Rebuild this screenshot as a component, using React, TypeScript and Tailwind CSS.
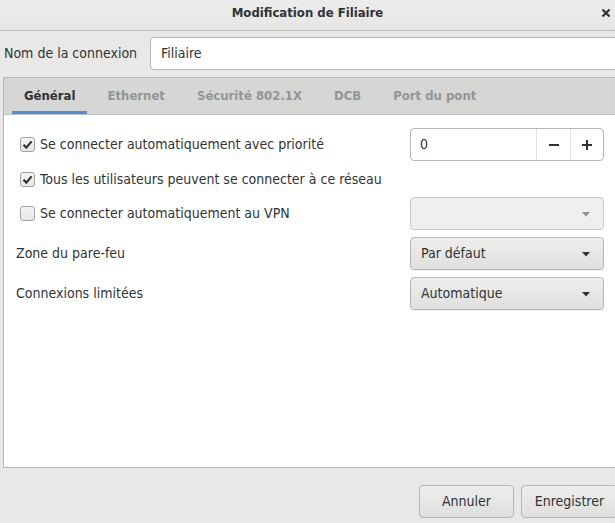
import React from "react";

const font = { fontFamily: '"DejaVu Sans Condensed", "DejaVu Sans", sans-serif' };

function CheckBox({ checked }: { checked?: boolean }) {
  return (
    <span className="w-[15px] h-[15px] rounded-[3px] border border-[#a1a1a1] bg-gradient-to-b from-[#f4f4f4] to-[#e6e6e6] flex items-center justify-center shrink-0">
      {checked && (
        <svg width="11" height="11" viewBox="0 0 11 11">
          <path d="M1.5 5.8 L4.3 8.6 L9.6 2.4" fill="none" stroke="#2e3436" strokeWidth="2.2" />
        </svg>
      )}
    </span>
  );
}

function Arrow({ color = "#2e3436" }: { color?: string }) {
  return (
    <svg width="10" height="6" viewBox="0 0 10 6">
      <path d="M1 1 L9 1 L5 5.5 Z" fill={color} />
    </svg>
  );
}

function Combo({ label, disabled }: { label?: string; disabled?: boolean }) {
  return (
    <div
      className={
        disabled
          ? "h-[33px] w-[194px] rounded-[4px] border border-[#cdc7c2] bg-[#efefef] flex items-center justify-end pr-[12px]"
          : "h-[33px] w-[194px] rounded-[4px] border border-[#b6b6b3] bg-gradient-to-b from-[#eeeeed] to-[#dfdfde] flex items-center justify-between pl-[10px] pr-[12px] shadow-[0_1px_0_rgba(0,0,0,0.05)]"
      }
    >
      {label && <span>{label}</span>}
      <Arrow color={disabled ? "#8b8e8f" : "#2e3436"} />
    </div>
  );
}

export default function App() {
  const tabs = ["Général", "Ethernet", "Sécurité 802.1X", "DCB", "Port du pont"];
  return (
    <div
      className="w-[615px] h-[523px] overflow-hidden bg-[#e8e8e7] text-[#2e3436] text-[14px] flex flex-col"
      style={font}
    >
      {/* title bar */}
      <div className="h-[31px] shrink-0 relative flex items-center justify-center bg-gradient-to-b from-[#ececec] to-[#e6e6e5] border-b border-[#bdbdbb]">
        <span className="font-bold text-[13px] -mt-[4px]">Modification de Filiaire</span>
        <svg className="absolute right-[4px] top-[8px]" width="10" height="10" viewBox="0 0 10 10">
          <path d="M1.5 1.5 L8.5 8.5 M8.5 1.5 L1.5 8.5" stroke="#2e3436" strokeWidth="2.2" />
        </svg>
      </div>

      {/* name row */}
      <div className="flex items-center mt-[6px] pl-[4px] shrink-0">
        <span className="w-[146px] shrink-0">Nom de la connexion</span>
        <div className="h-[33px] w-[480px] shrink-0 rounded-[4px] border border-[#b6b6b3] bg-white flex items-center pl-[10px]">
          Filiaire
        </div>
      </div>

      {/* notebook */}
      <div className="mt-[7px] ml-[3px] w-[630px] h-[391px] shrink-0 border border-[#b6b6b3] bg-white flex flex-col">
        <div className="h-[37px] shrink-0 bg-[#d6d6d5] border-b border-[#c0c0be] flex items-stretch pl-[8px] gap-[8px] text-[13px]">
          {tabs.map((t, i) => (
            <div
              key={t}
              className={
                i === 0
                  ? "px-[12px] flex items-center font-bold text-[#2e3436] shadow-[inset_0_-3px_0_#4a90d9]"
                  : "px-[12px] flex items-center font-bold text-[#929595]"
              }
            >
              {t}
            </div>
          ))}
        </div>

        <div className="w-[600px] pl-[12px] pt-[13px] flex flex-col gap-[7px]">
          <div className="h-[33px] flex items-center justify-between">
            <div className="flex items-center gap-[5px] pl-[4px]">
              <CheckBox checked />
              <span>Se connecter automatiquement avec priorité</span>
            </div>
            <div className="h-[33px] w-[194px] rounded-[4px] border border-[#b6b6b3] bg-white flex">
              <div className="flex-1 flex items-center pl-[9px]">0</div>
              <div className="w-[34px] border-l border-[#e2e2e0] flex items-center justify-center">
                <svg width="12" height="12" viewBox="0 0 12 12">
                  <path d="M1 6 H11" stroke="#2e3436" strokeWidth="2" />
                </svg>
              </div>
              <div className="w-[33px] border-l border-[#e2e2e0] flex items-center justify-center">
                <svg width="12" height="12" viewBox="0 0 12 12">
                  <path d="M1 6 H11 M6 1 V11" stroke="#2e3436" strokeWidth="2" />
                </svg>
              </div>
            </div>
          </div>

          <div className="h-[22px] flex items-center gap-[5px] pl-[4px]">
            <CheckBox checked />
            <span>Tous les utilisateurs peuvent se connecter à ce réseau</span>
          </div>

          <div className="h-[33px] flex items-center justify-between">
            <div className="flex items-center gap-[5px] pl-[4px]">
              <CheckBox />
              <span>Se connecter automatiquement au VPN</span>
            </div>
            <Combo disabled />
          </div>

          <div className="h-[33px] flex items-center justify-between">
            <span>Zone du pare-feu</span>
            <Combo label="Par défaut" />
          </div>

          <div className="h-[33px] flex items-center justify-between">
            <span>Connexions limitées</span>
            <Combo label="Automatique" />
          </div>
        </div>
      </div>

      {/* buttons */}
      <div className="flex gap-[7px] mt-[17px] pl-[419px] shrink-0">
        <div className="h-[33px] w-[95px] shrink-0 rounded-[4px] border border-[#b6b6b3] bg-gradient-to-b from-[#eeeeed] to-[#dfdfde] flex items-center justify-center">
          Annuler
        </div>
        <div className="h-[33px] w-[97px] shrink-0 rounded-[4px] border border-[#b6b6b3] bg-gradient-to-b from-[#eeeeed] to-[#dfdfde] flex items-center justify-center">
          Enregistrer
        </div>
      </div>
    </div>
  );
}
